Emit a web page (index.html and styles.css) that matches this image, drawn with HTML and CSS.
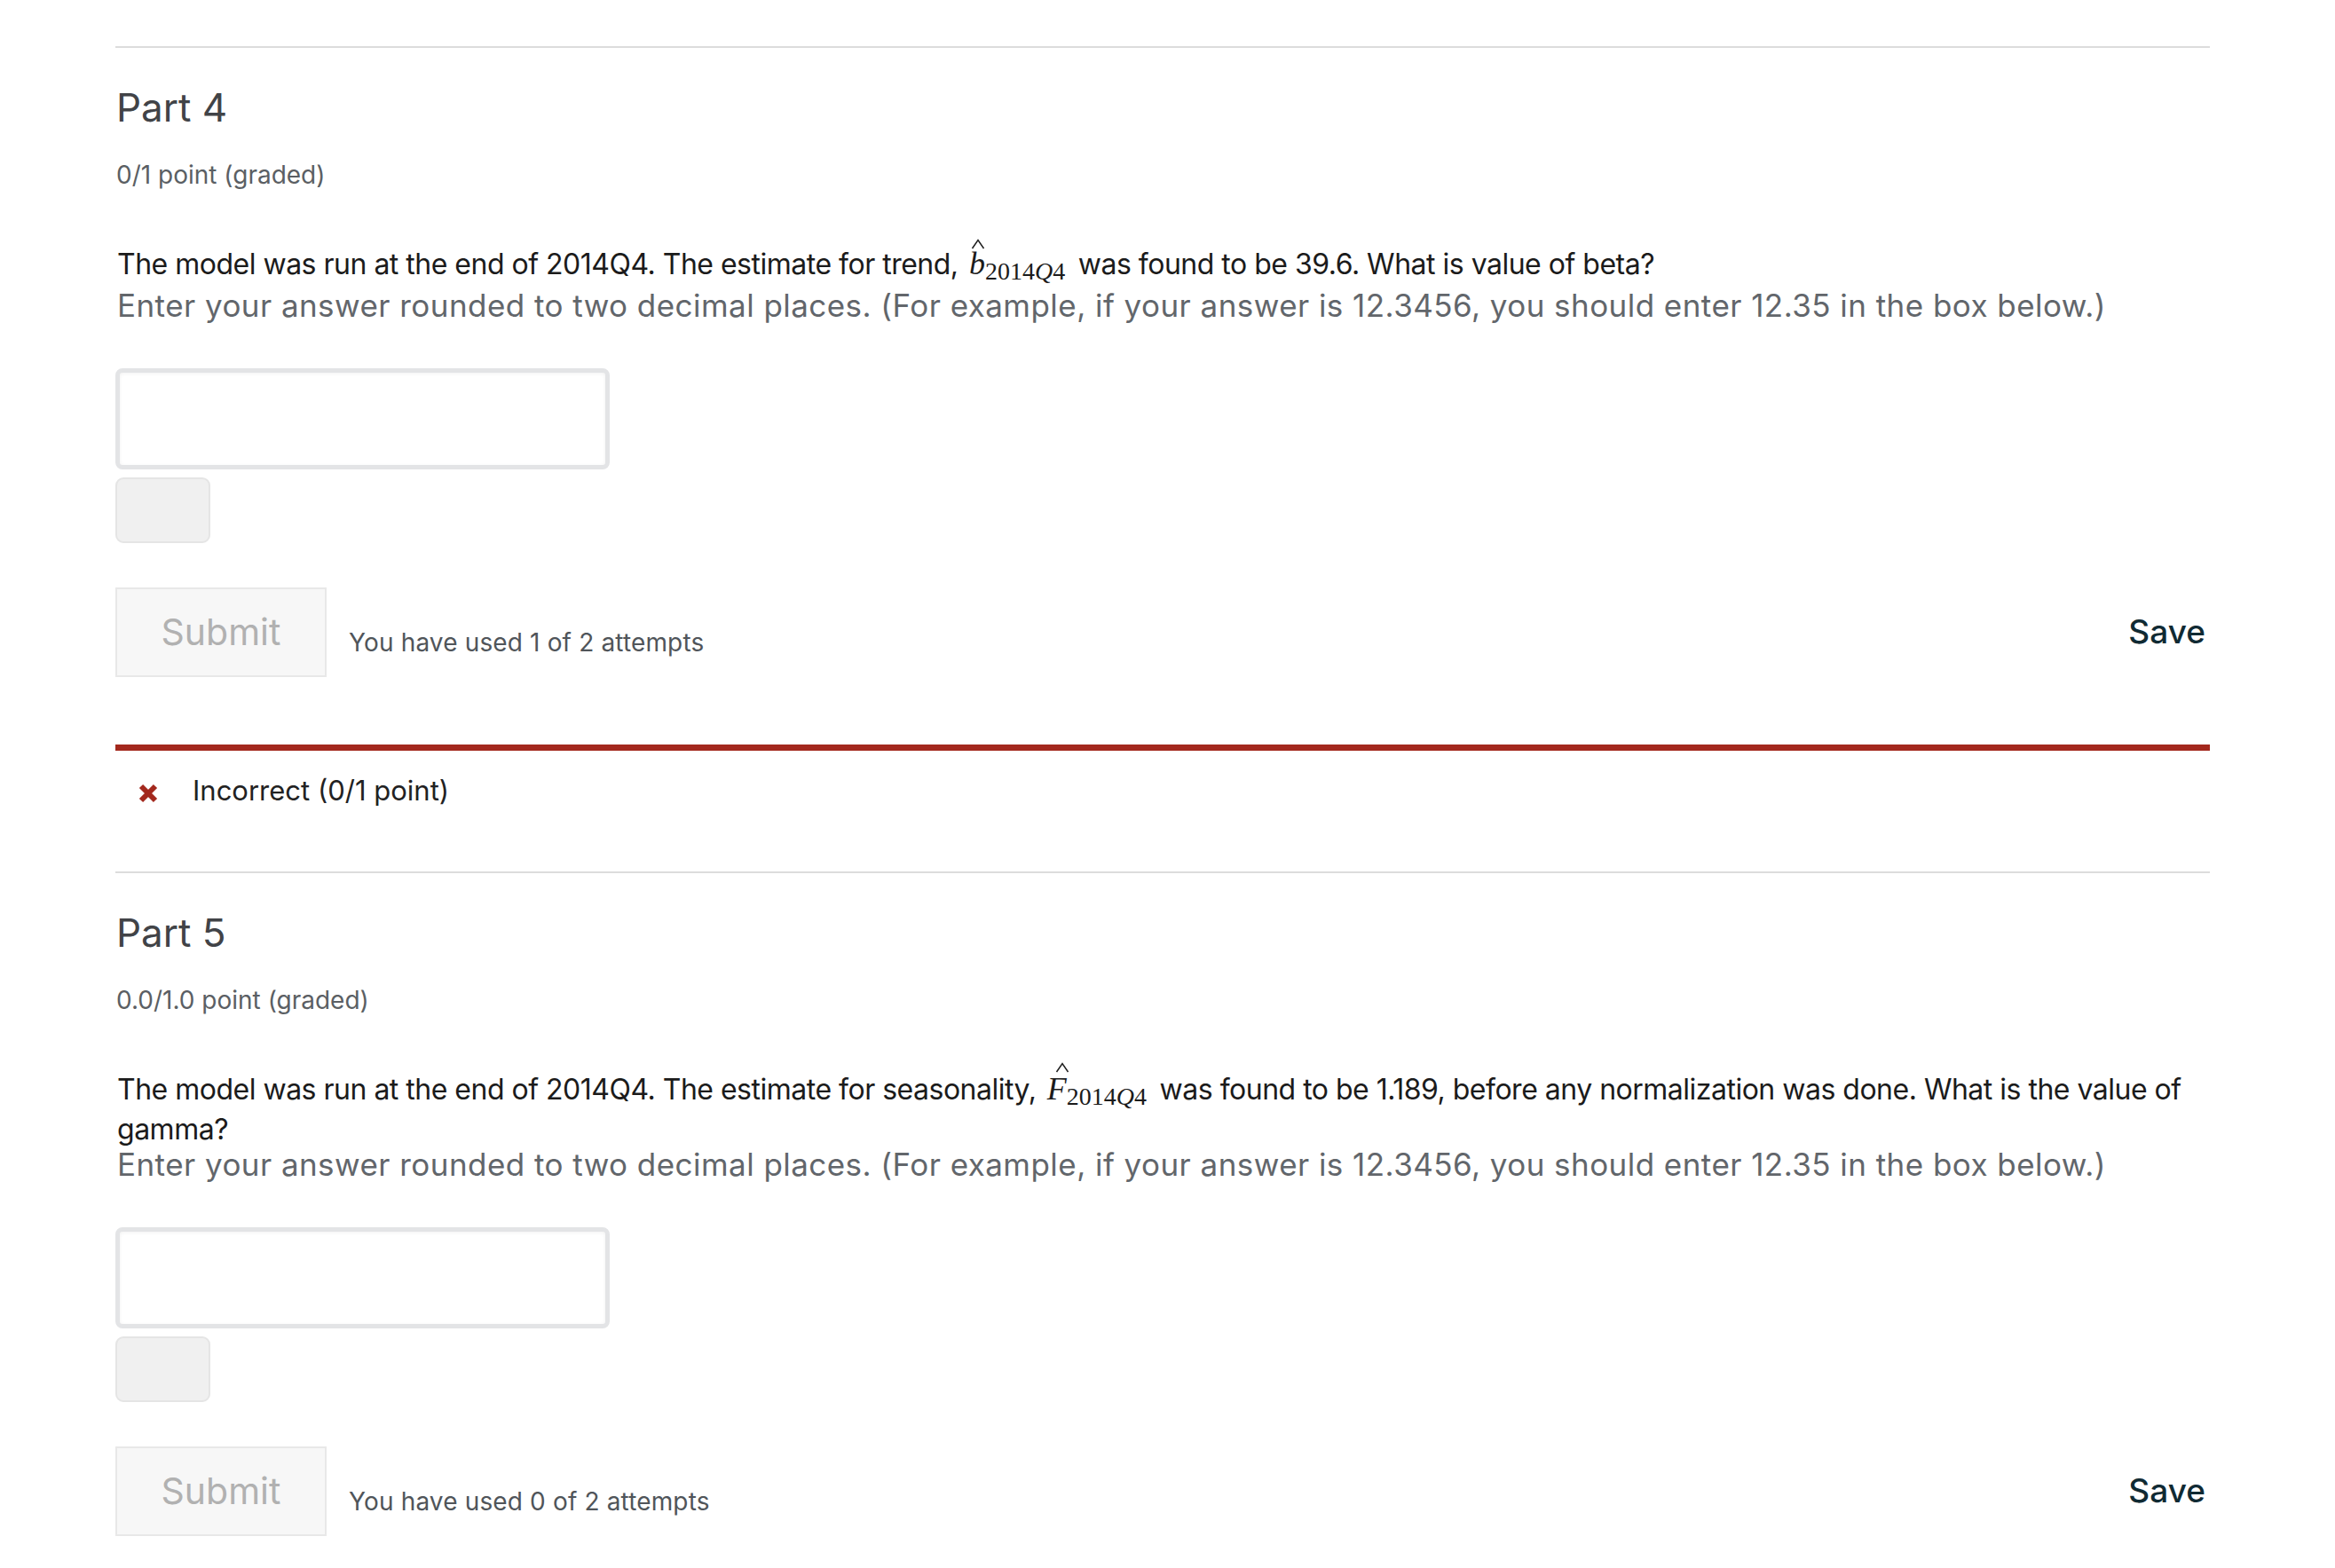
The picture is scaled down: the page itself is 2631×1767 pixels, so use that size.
FILE: index.html
```html
<!DOCTYPE html>
<html lang="en">
<head>
<meta charset="utf-8">
<title>Problem</title>
<link rel="stylesheet" href="styles.css">
</head>
<body>
<div class="page">
  <section class="problem">
    <div class="rule"></div>
    <h3 class="part-title">Part 4</h3>
    <div class="grade">0/1 point (graded)</div>
    <p class="question">The model was run at the end of 2014Q4. The estimate for trend, <span class="math"><span class="hat"><i>b</i><svg class="acc" viewBox="0 0 16 12" width="16" height="12"><path d="M1.5 11 L8 1.5 L14.5 11" fill="none" stroke="#1e1e1e" stroke-width="1.5"/></svg></span><sub>2014<i>Q</i>4</sub></span> was found to be 39.6. What is value of beta?</p>
    <p class="hint">Enter your answer rounded to two decimal places. (For example, if your answer is 12.3456, you should enter 12.35 in the box below.)</p>
    <div class="input-box"></div>
    <div class="status-box"></div>
    <div class="actions">
      <button class="submit">Submit</button>
      <span class="attempts">You have used 1 of 2 attempts</span>
      <button class="save">Save</button>
    </div>
    <div class="feedback-bar"></div>
    <div class="feedback">
      <svg class="x-icon" viewBox="0 0 24 22" width="24" height="22"><path d="M4 3 L20 19 M20 3 L4 19" stroke="#a3281d" stroke-width="6" stroke-linecap="butt"/></svg>
      <span class="feedback-text">Incorrect (0/1 point)</span>
    </div>
  </section>
  <section class="problem">
    <div class="rule"></div>
    <h3 class="part-title">Part 5</h3>
    <div class="grade">0.0/1.0 point (graded)</div>
    <p class="question">The model was run at the end of 2014Q4. The estimate for seasonality, <span class="math"><span class="hat hat-f"><i>F</i><svg class="acc" viewBox="0 0 16 12" width="16" height="12"><path d="M1.5 11 L8 1.5 L14.5 11" fill="none" stroke="#1e1e1e" stroke-width="1.5"/></svg></span><sub>2014<i>Q</i>4</sub></span> was found to be 1.189, before any normalization was done. What is the value of gamma?</p>
    <p class="hint">Enter your answer rounded to two decimal places. (For example, if your answer is 12.3456, you should enter 12.35 in the box below.)</p>
    <div class="input-box"></div>
    <div class="status-box"></div>
    <div class="actions">
      <button class="submit">Submit</button>
      <span class="attempts">You have used 0 of 2 attempts</span>
      <button class="save">Save</button>
    </div>
  </section>
</div>
</body>
</html>
```
FILE: styles.css
```css
html, body {
  margin: 0;
  padding: 0;
  background: #ffffff;
}
body {
  font-family: Inter, "Noto Sans", "Liberation Sans", sans-serif;
}
.page {
  width: 2360px;
  margin-left: 130px;
  padding-top: 52px;
}
.rule {
  height: 2px;
  background: #dcdcdc;
}
.part-title {
  margin: 41px 0 0;
  font-size: 44px;
  line-height: 53px;
  font-weight: 400;
  color: #414347;
  padding-left: 1px;
}
.grade {
  margin-top: 30px;
  font-size: 28px;
  line-height: 39px;
  color: #5b5f64;
  padding-left: 1px;
}
.question {
  margin: 62px 0 0;
  font-size: 32px;
  line-height: 38px;
  letter-spacing: -0.5px;
  color: #1b1b1b;
  padding-left: 2px;
}
.hint {
  margin: 0;
  font-size: 35px;
  line-height: 40px;
  letter-spacing: 0.45px;
  color: #62666b;
  padding-left: 2px;
}
.math {
  font-family: "Liberation Serif", "DejaVu Serif", serif;
  font-size: 36px;
  line-height: 0;
  letter-spacing: 0;
  white-space: nowrap;
  margin: 0 6px 0 4px;
}
.hat {
  position: relative;
  display: inline-block;
  line-height: 36px;
}
.acc {
  position: absolute;
  left: 2px;
  top: -10px;
}
.hat-f .acc {
  left: 9px;
  top: -12px;
}
.math sub {
  font-size: 28px;
  line-height: 36px;
  vertical-align: -6px;
}
.input-box {
  margin-top: 51px;
  width: 557px;
  height: 114px;
  box-sizing: border-box;
  border: 5px solid #e3e4e6;
  border-radius: 8px;
  background: #fff;
  box-shadow: inset 0 1px 4px rgba(0, 0, 0, 0.06);
}
.status-box {
  margin-top: 9px;
  width: 107px;
  height: 74px;
  box-sizing: border-box;
  background: #f0f0f0;
  border: 2px solid #e5e5e5;
  border-radius: 9px;
}
.actions {
  margin-top: 50px;
  display: flex;
  align-items: center;
}
.submit {
  width: 238px;
  height: 101px;
  box-sizing: border-box;
  background: #f7f7f7;
  border: 2px solid #e8e8e8;
  border-radius: 0;
  color: #b1b1b1;
  font-family: Inter, "Noto Sans", sans-serif;
  font-size: 41px;
  padding: 0 0 2px;
}
.attempts {
  align-self: flex-end;
  margin: 0 0 19px 25px;
  font-size: 28px;
  line-height: 39px;
  letter-spacing: 0.15px;
  color: #50555a;
}
.save {
  margin-left: auto;
  background: none;
  border: 0;
  padding: 0 5px 2px 0;
  font-family: Inter, "Noto Sans", sans-serif;
  font-size: 37px;
  font-weight: 500;
  color: #102a33;
}
.feedback-bar {
  margin-top: 76px;
  height: 7px;
  background: #a3281d;
}
.feedback {
  margin-top: 24px;
  height: 42px;
  display: flex;
  align-items: center;
  padding-left: 25px;
  margin-bottom: 70px;
}
.x-icon {
  flex: none;
  margin-top: 6px;
}
.feedback-text {
  margin-left: 38px;
  font-size: 31px;
  line-height: 42px;
  color: #222;
}
```
